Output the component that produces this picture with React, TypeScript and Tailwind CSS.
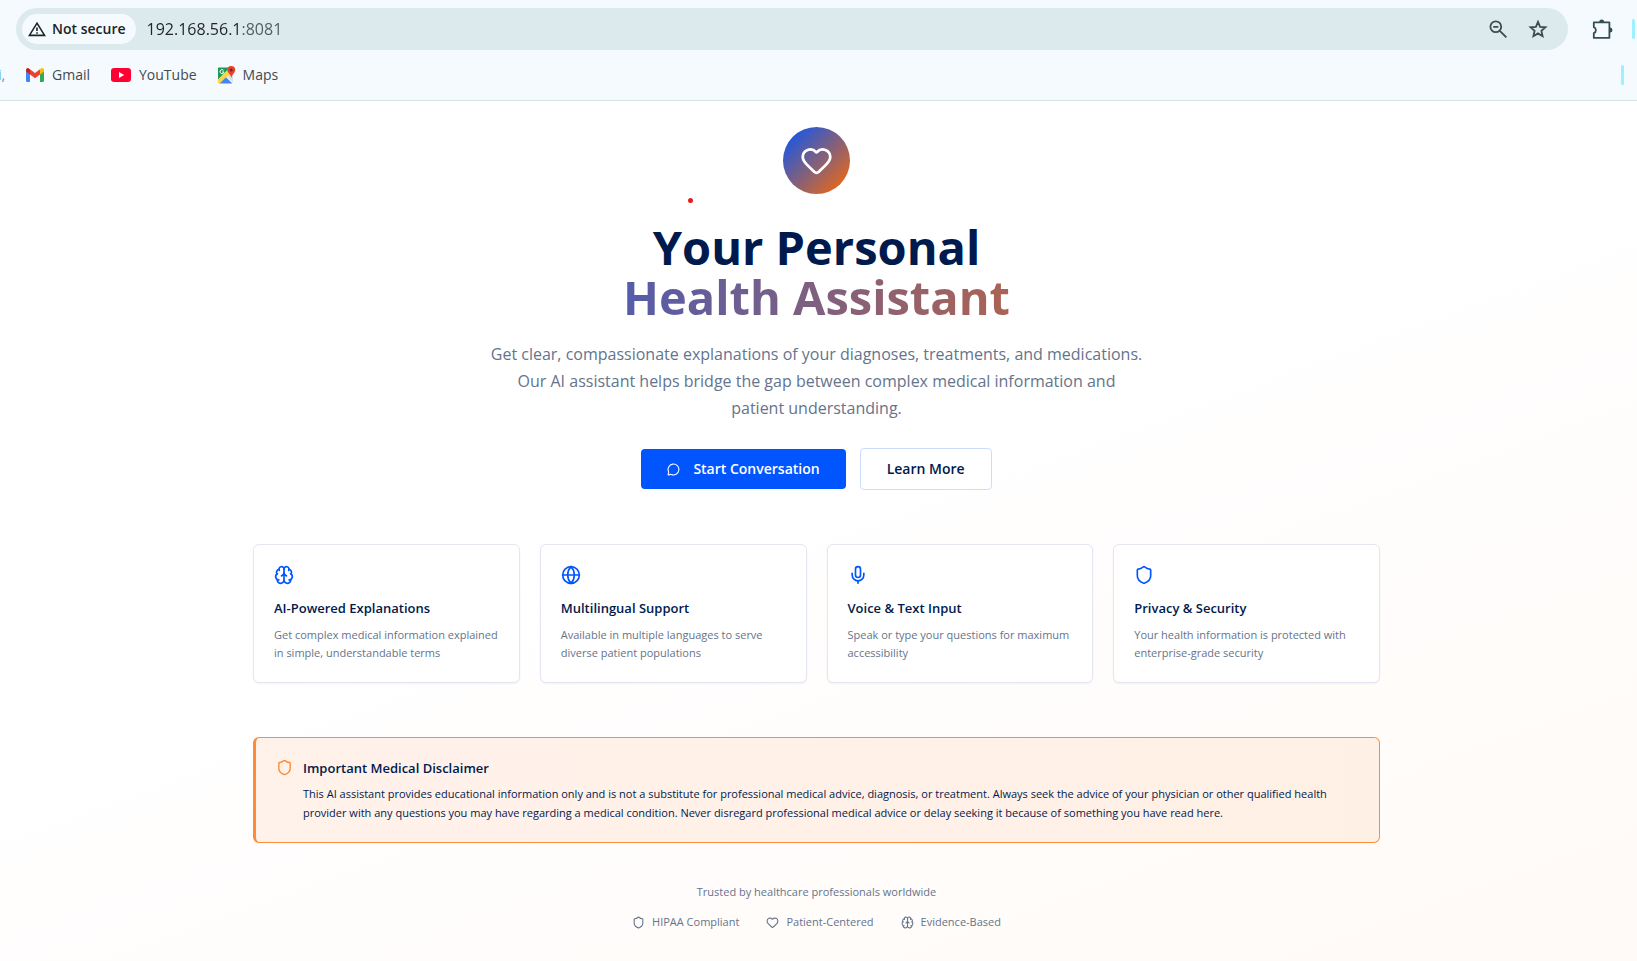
import React from "react";
import { Brain, Globe, Heart, MessageCircle, Mic, Shield } from "lucide-react";

const features = [
  {
    icon: Brain,
    title: "AI-Powered Explanations",
    text: "Get complex medical information explained in simple, understandable terms",
  },
  {
    icon: Globe,
    title: "Multilingual Support",
    text: "Available in multiple languages to serve diverse patient populations",
  },
  {
    icon: Mic,
    title: "Voice & Text Input",
    text: "Speak or type your questions for maximum accessibility",
  },
  {
    icon: Shield,
    title: "Privacy & Security",
    text: "Your health information is protected with enterprise-grade security",
  },
];

const badges = [
  { icon: Shield, label: "HIPAA Compliant" },
  { icon: Heart, label: "Patient-Centered" },
  { icon: Brain, label: "Evidence-Based" },
];

function WarningIcon() {
  return (
    <svg viewBox="0 0 18 16" className="h-4 w-[18px]" fill="none" stroke="#1f2426" strokeWidth="1.6" aria-hidden="true">
      <path d="M9 2.2 16.6 14.4H1.4Z" />
      <path d="M9 6.4v3.6M9 11.2v1.6" />
    </svg>
  );
}

function GmailIcon() {
  return (
    <svg viewBox="0 0 18 14" className="h-[14px] w-[18px]" aria-hidden="true">
      <path d="M0 3v9.8C0 13.5.5 14 1.2 14H4V6Z" fill="#4285f4" />
      <path d="M18 3v9.8c0 .7-.5 1.2-1.2 1.2H14V6Z" fill="#34a853" />
      <path d="M4 1.2v5.2l5 3.8 5-3.8V1.2L9 5Z" fill="#ea4335" />
      <path d="M0 2v1.6L4 6.6V1.2L2.8.4C1.6-.5 0 .4 0 2Z" fill="#c5221f" />
      <path d="M18 2v1.6l-4 3V1.2l1.2-.8C16.4-.5 18 .4 18 2Z" fill="#fbbc04" />
    </svg>
  );
}

function YouTubeIcon() {
  return (
    <svg viewBox="0 0 20 14" className="h-[14px] w-5" aria-hidden="true">
      <rect width="20" height="14" rx="3.2" fill="#ff0033" />
      <path d="M8 4v6l5.2-3Z" fill="#fff" />
    </svg>
  );
}

function MapsIcon() {
  return (
    <svg viewBox="0 0 18 18" className="h-[18px] w-[18px] overflow-visible" aria-hidden="true">
      <path d="M1.5 1.5H13L1 14V2Z" fill="#1e9b57" />
      <path d="M9.4 10.6 14 6l2 3v7.2Z" fill="#dcdfe2" />
      <path d="M.8 13.6 11.4 3.2l1.8 4.4L3 17.4H1.6L.8 16Z" fill="#fdd446" />
      <path d="M2.6 17.6 9 11.2l6.4 6.4Z" fill="#4285f4" />
      <path d="M14.2 0a4 4 0 0 1 4 4c0 3-3.2 4-3.8 8-.6-4-4-5-4-8a4 4 0 0 1 3.8-4Z" fill="#e0432f" />
      <circle cx="14.2" cy="4" r="1.5" fill="#8c1f17" />
      <path d="M6.6 4.4A2 2 0 1 0 7 6H5.2" fill="none" stroke="#fff" strokeWidth="1" />
    </svg>
  );
}

function ZoomOutIcon() {
  return (
    <svg viewBox="0 0 18 18" className="h-[18px] w-[18px]" fill="none" stroke="#414b4e" strokeWidth="1.8" aria-hidden="true">
      <circle cx="6.8" cy="6.8" r="5.4" />
      <path d="m10.8 10.8 6.6 6.6M4.2 6.8h5.2" />
    </svg>
  );
}

function StarIcon() {
  return (
    <svg viewBox="0 0 20 20" className="h-5 w-5" fill="none" stroke="#414b4e" strokeWidth="1.8" aria-hidden="true">
      <path d="m10 2.8 2.1 5 5.4.5-4.1 3.6 1.2 5.3-4.6-2.8-4.6 2.8 1.2-5.3-4.1-3.6 5.4-.5Z" />
    </svg>
  );
}

function ExtensionIcon() {
  return (
    <svg viewBox="0 0 21 21" className="h-[21px] w-[21px]" aria-hidden="true">
      <path d="M1.8 3.4h15.6v15.4H1.8v-4.6a3.2 3.2 0 0 0 0-6Z" fill="none" stroke="#344f52" strokeWidth="1.8" strokeLinejoin="round" />
      <path d="M7.2 3a2.5 2.5 0 0 1 5 0ZM18 8.6a2.5 2.5 0 0 1 0 5Z" fill="#344f52" />
    </svg>
  );
}

function BrowserBar() {
  return (
    <header className="border-b border-[#d6e3e6] bg-[#f4fafd]">
      <div className="flex items-center pt-2 pl-4">
        <div className="flex h-[42px] flex-1 items-center rounded-full bg-[#dceaee] pr-5 pl-[6px]">
          <button type="button" className="flex h-[30px] items-center gap-[6px] rounded-full bg-[#f4fafd] pr-[10px] pl-[6px] text-sm font-semibold text-[#1f2426]">
            <WarningIcon />
            Not secure
          </button>
          <input
            type="text"
            aria-label="Address"
            defaultValue="192.168.56.1:8081"
            className="ml-[11px] h-8 min-w-0 flex-1 bg-linear-to-r from-[#1f2426] from-[95px] to-[#4d5a5e] to-[95px] bg-clip-text text-base text-transparent outline-none"
          />
          <div className="flex items-center gap-[21px]">
            <button type="button" aria-label="Zoom"><ZoomOutIcon /></button>
            <button type="button" aria-label="Bookmark this page"><StarIcon /></button>
          </div>
        </div>
        <button type="button" aria-label="Extensions" className="ml-6"><ExtensionIcon /></button>
        <span className="mr-[2px] ml-[19px] h-5 w-[3px] rounded-full bg-[#9df0ff]" />
      </div>
      <nav className="flex h-[50px] items-center text-sm text-[#434b4e]">
        <span className="w-[26px] text-[#5a8fc0]"><span className="-ml-[2px]">i</span>,</span>
        <a href="#gmail" className="flex items-center gap-2"><GmailIcon />Gmail</a>
        <a href="#youtube" className="ml-[21px] flex items-center gap-2"><YouTubeIcon />YouTube</a>
        <a href="#maps" className="ml-5 flex items-center gap-2"><MapsIcon />Maps</a>
        <span className="mr-[13px] ml-auto h-5 w-[3px] rounded-full bg-[#9df0ff]" />
      </nav>
    </header>
  );
}

export default function App() {
  return (
    <div className="flex min-h-screen flex-col bg-white font-['Open_Sans','Noto_Sans',sans-serif]">
      <BrowserBar />
      <main className="flex-1 bg-linear-160/srgb from-white from-45% to-[#fffaf7] pr-1">
        <div className="mx-auto max-w-[1127px] pt-[26px] pb-6">
          <section className="flex flex-col items-center text-center">
            <div className="relative flex size-[67px] items-center justify-center rounded-full bg-linear-to-br/srgb from-[#0055ff] to-[#ff6a00]">
              <Heart className="size-[33px] text-white" />
              <span className="absolute top-[71px] -left-[95px] size-[5px] rounded-full bg-[#e81c1c]" />
            </div>
            <h1 className="mt-7 w-full text-[47px] leading-[50px] font-bold text-[#001a4d]">
              <span className="block">Your Personal</span>
              <span className="block bg-linear-to-r/srgb from-[#0055ff] to-[#ff6a00] bg-clip-text text-transparent">
                Health Assistant
              </span>
            </h1>
            <p className="mt-[19px] max-w-[653px] text-base leading-[27px] text-[#65748b]">
              Get clear, compassionate explanations of your diagnoses, treatments, and medications. Our AI assistant helps bridge the gap between complex medical information and patient understanding.
            </p>
            <div className="mt-[26px] flex items-center gap-[14px]">
              <button type="button" className="flex h-10 items-center gap-[13px] rounded bg-[#0055ff] px-[26px] text-sm font-semibold text-white">
                <MessageCircle className="size-[13px]" />
                Start Conversation
              </button>
              <button type="button" className="flex h-[42px] items-center rounded border border-[#ccdcff] bg-white px-[26px] text-sm font-semibold text-[#001a4d]">
                Learn More
              </button>
            </div>
          </section>

          <section className="mt-[54px] grid grid-cols-4 gap-5">
            {features.map(({ icon: Icon, title, text }) => (
              <article key={title} className="rounded-md border border-[#e4e5f0] bg-white p-5 shadow-xs">
                <Icon className="size-5 text-[#0055ff]" />
                <h3 className="mt-[13px] text-[13px] leading-5 font-semibold text-[#001a4d]">{title}</h3>
                <p className="mt-2 text-[11px] leading-[18px] text-[#65748b]">{text}</p>
              </article>
            ))}
          </section>

          <section className="mt-[54px] flex gap-[10px] rounded-md border border-l-3 border-[#ff8b38] bg-linear-to-r/srgb from-[#fff2ea] to-[#fff0e6] p-5">
            <Shield className="mt-px size-[17px] shrink-0 text-[#ff8b38]" />
            <div>
              <h2 className="text-[13px] leading-5 font-semibold text-[#001a4d]">Important Medical Disclaimer</h2>
              <p className="mt-[6px] text-[11px] leading-[19px] text-[#001a4d]">
                This AI assistant provides educational information only and is not a substitute for professional medical advice, diagnosis, or treatment. Always seek the advice of your physician or other qualified health provider with any questions you may have regarding a medical condition. Never disregard professional medical advice or delay seeking it because of something you have read here.
              </p>
            </div>
          </section>

          <footer className="mt-10 text-center text-[11px] leading-[18px] text-[#65748b]">
            <p>Trusted by healthcare professionals worldwide</p>
            <ul className="mt-3 flex justify-center gap-[27px]">
              {badges.map(({ icon: Icon, label }) => (
                <li key={label} className="flex items-center gap-[7px]">
                  <Icon className="size-[13px]" />
                  {label}
                </li>
              ))}
            </ul>
          </footer>
        </div>
      </main>
    </div>
  );
}
